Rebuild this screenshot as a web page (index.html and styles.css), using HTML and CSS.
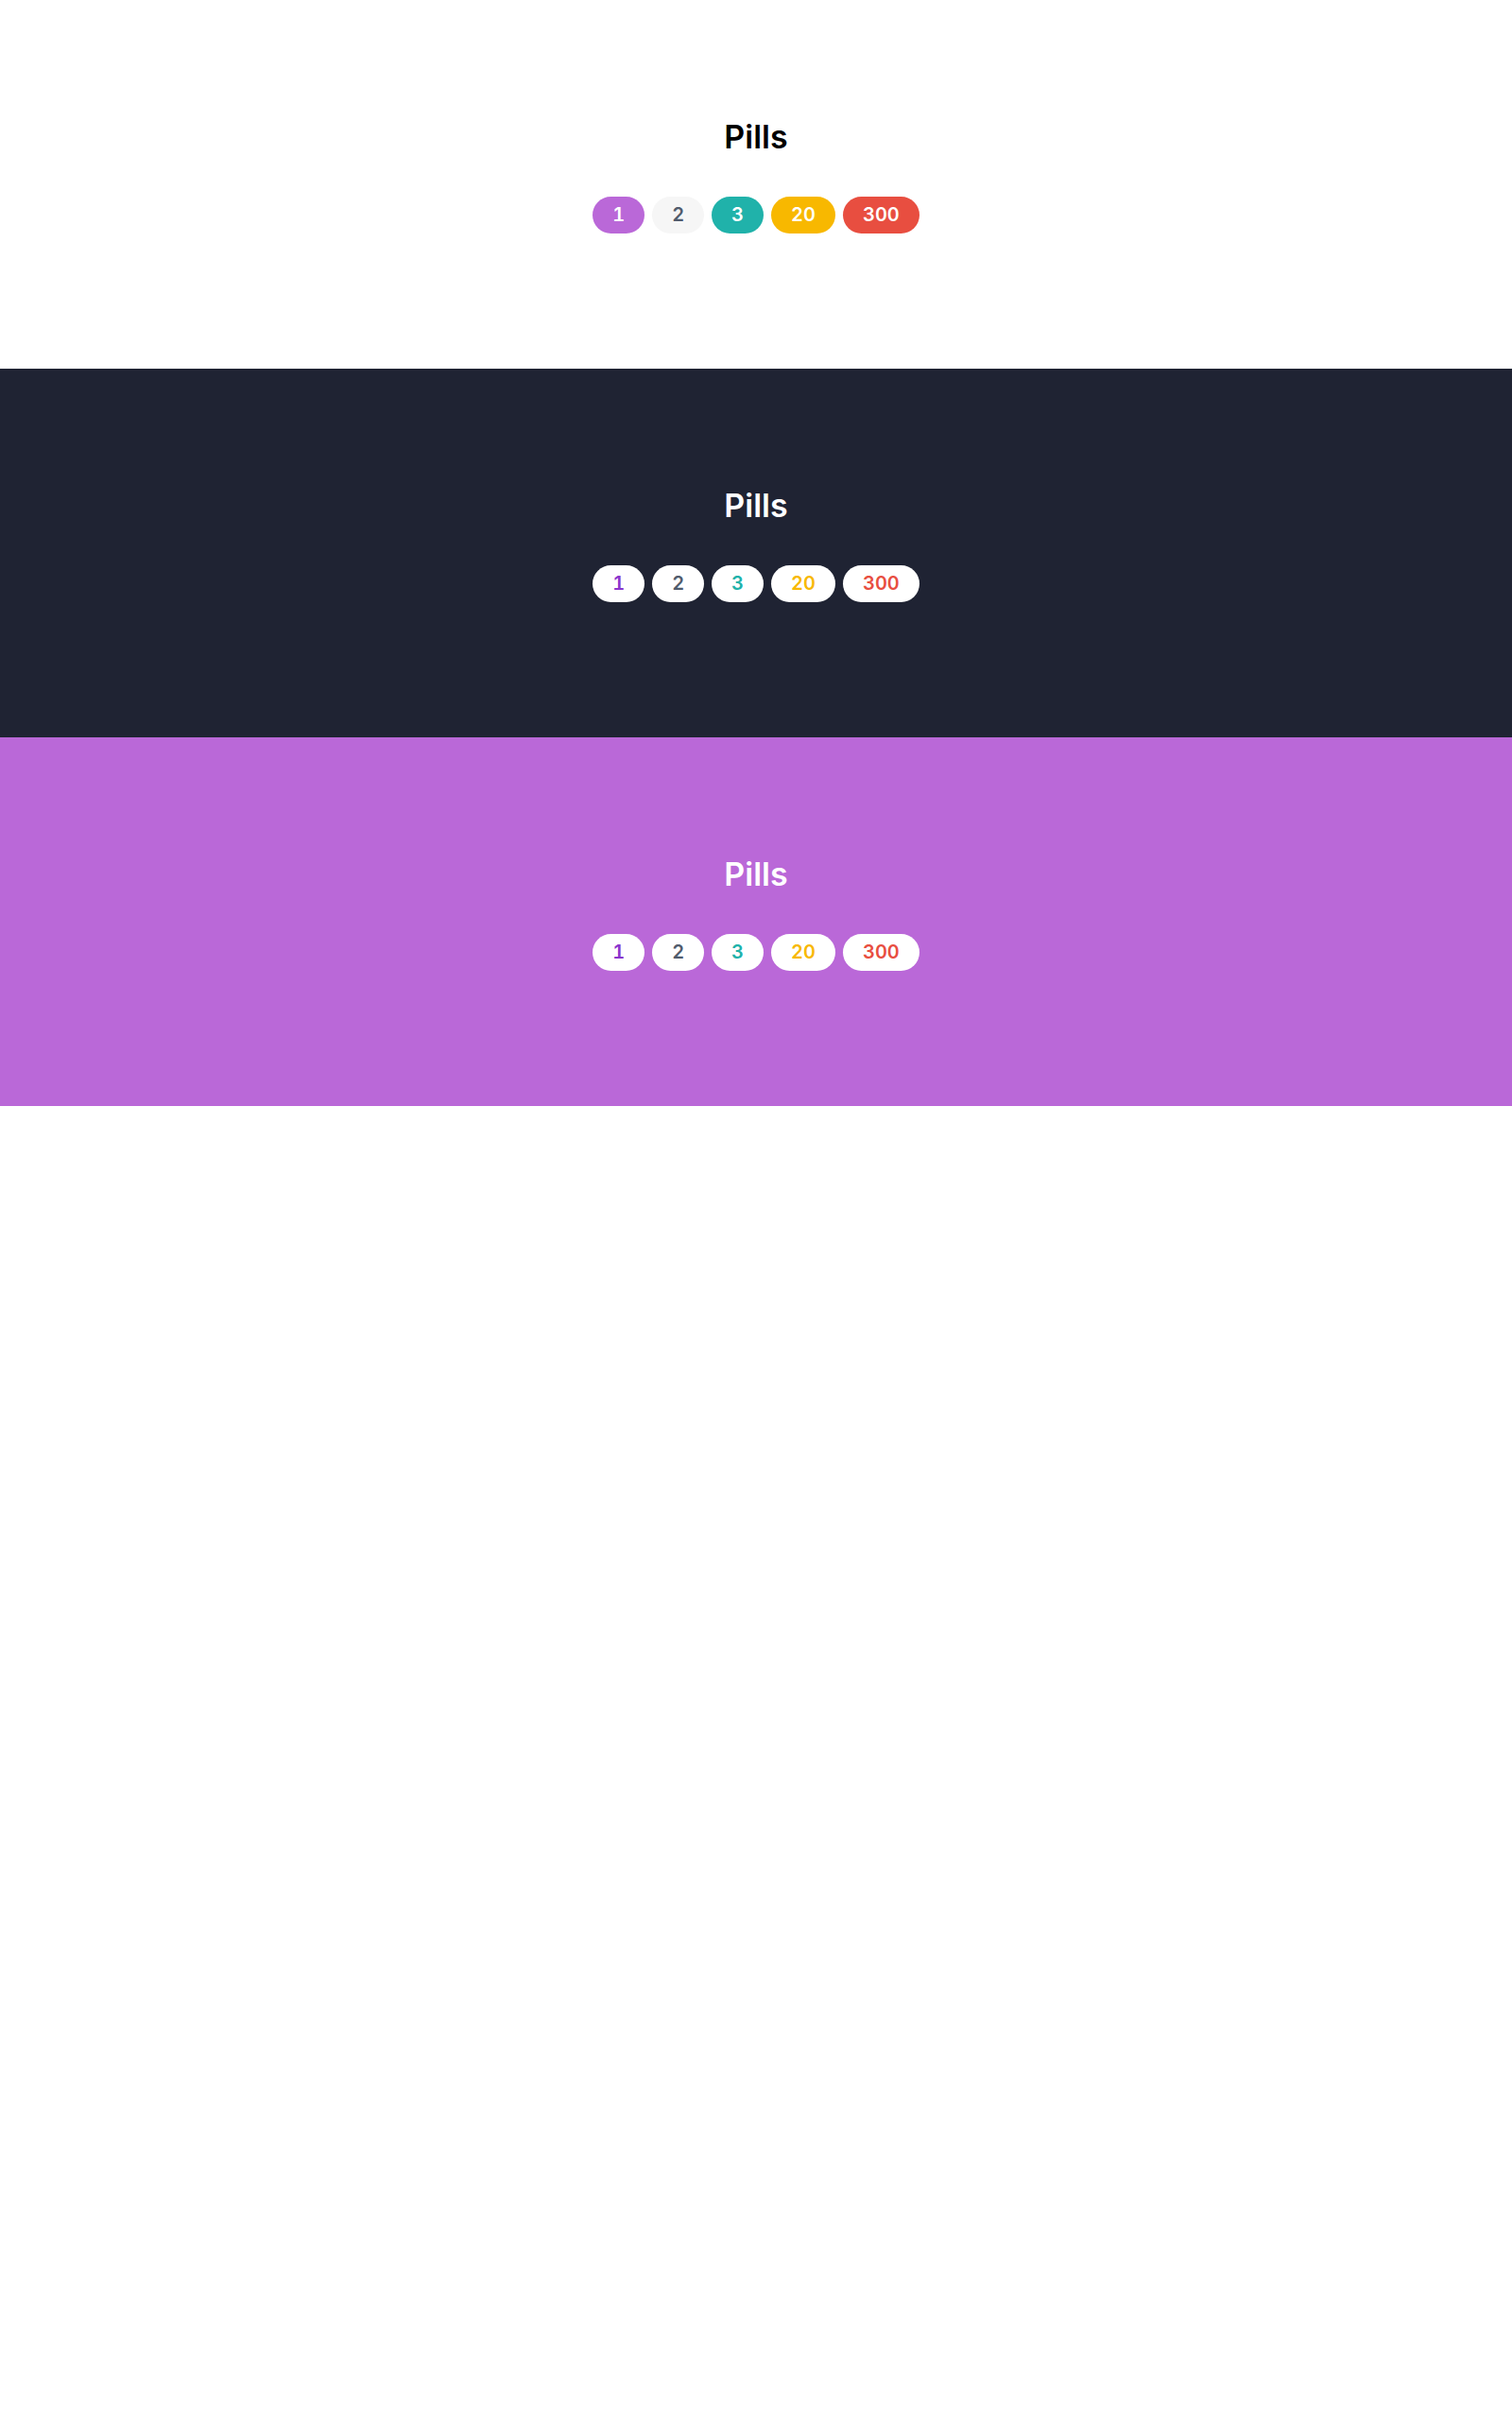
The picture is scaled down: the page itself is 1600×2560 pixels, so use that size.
FILE: index.html
```html
<!DOCTYPE html>
<html>
<head>
<meta charset="utf-8">
<link rel="stylesheet" href="styles.css">
</head>
<body>
<section class="block block-light">
  <h2 class="title">Pills</h2>
  <div class="pills">
    <span class="pill pill-purple">1</span>
    <span class="pill pill-gray">2</span>
    <span class="pill pill-teal">3</span>
    <span class="pill pill-yellow">20</span>
    <span class="pill pill-red">300</span>
  </div>
</section>
<section class="block block-dark inverse">
  <h2 class="title">Pills</h2>
  <div class="pills">
    <span class="pill pill-purple">1</span>
    <span class="pill pill-gray">2</span>
    <span class="pill pill-teal">3</span>
    <span class="pill pill-yellow">20</span>
    <span class="pill pill-red">300</span>
  </div>
</section>
<section class="block block-purple inverse">
  <h2 class="title">Pills</h2>
  <div class="pills">
    <span class="pill pill-purple">1</span>
    <span class="pill pill-gray">2</span>
    <span class="pill pill-teal">3</span>
    <span class="pill pill-yellow">20</span>
    <span class="pill pill-red">300</span>
  </div>
</section>
</body>
</html>
```
FILE: styles.css
```css
html, body {
  margin: 0;
  padding: 0;
  background: #ffffff;
  font-family: Inter, Lato, "Noto Sans", sans-serif;
}
.block {
  height: 390px;
  box-sizing: border-box;
  padding-top: 125px;
  display: flex;
  flex-direction: column;
  align-items: center;
}
.block-light { background: #ffffff; color: #000000; }
.block-dark { background: #1f2333; color: #ffffff; }
.block-purple { background: #ba68d8; color: #ffffff; }
.title {
  margin: 0;
  font-size: 34px;
  line-height: 40px;
  font-weight: 600;
}
.pills {
  margin-top: 43px;
  display: flex;
  gap: 8px;
}
.pill {
  display: inline-block;
  height: 39px;
  line-height: 39px;
  padding: 0 21px;
  min-width: 12px;
  text-align: center;
  border-radius: 20px;
  font-size: 20px;
  font-weight: 600;
  font-variant-numeric: tabular-nums;
  color: #ffffff;
}
.pill-purple { background: #ba68d8; }
.pill-gray { background: #f6f6f6; color: #505b6c; }
.pill-teal { background: #20b2aa; }
.pill-yellow { background: #f8b800; }
.pill-red { background: #e84e40; }
.inverse .pill { background: #ffffff; }
.inverse .pill-purple { color: #8a35cc; }
.inverse .pill-gray { color: #505b6c; }
.inverse .pill-teal { color: #20b2aa; }
.inverse .pill-yellow { color: #f8b800; }
.inverse .pill-red { color: #e84e40; }
```
